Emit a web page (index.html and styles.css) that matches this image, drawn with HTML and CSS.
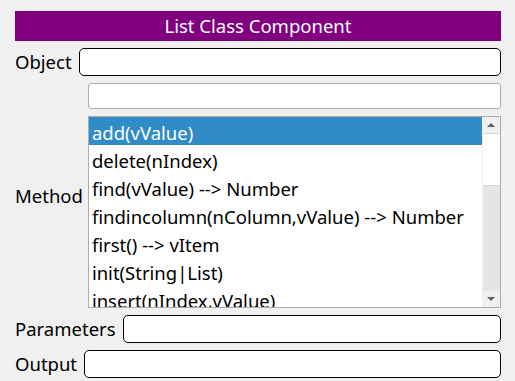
FILE: index.html
```html
<!DOCTYPE html>
<html lang="en">
<head>
    <meta charset="UTF-8">
    <meta name="viewport" content="width=device-width, initial-scale=1.0">
    <title>List Class Component</title>
    <link rel="stylesheet" href="styles.css">
</head>
<body>
    <div class="title">List Class Component</div>

    <div class="row">
        <label class="label" for="object">Object</label>
        <input class="field" type="text" id="object">
    </div>

    <div class="row method-row">
        <span class="label">Method</span>
        <div class="method-box">
            <input class="search" type="text">
            <div class="listbox">
                <ul class="items">
                    <li class="selected">add(vValue)</li>
                    <li>delete(nIndex)</li>
                    <li>find(vValue) --&gt; Number</li>
                    <li>findincolumn(nColumn,vValue) --&gt; Number</li>
                    <li>first() --&gt; vItem</li>
                    <li>init(String|List)</li>
                    <li>insert(nIndex,vValue)</li>
                </ul>
                <div class="scrollbar">
                    <div class="arrow up"></div>
                    <div class="thumb"></div>
                    <div class="track"></div>
                    <div class="arrow down"></div>
                </div>
            </div>
        </div>
    </div>

    <div class="row">
        <label class="label" for="params">Parameters</label>
        <input class="field" type="text" id="params">
    </div>

    <div class="row">
        <label class="label" for="output">Output</label>
        <input class="field" type="text" id="output">
    </div>
</body>
</html>
```

FILE: styles.css
```css
body {
    font-family: "Noto Sans", "Open Sans", sans-serif;
    font-size: 18.5px;
    margin: 0;
    padding: 11px 14px 0 15px;
    background-color: #f0f0f0;
    color: #000;
    display: flex;
    flex-direction: column;
    gap: 7px;
}

.title {
    background-color: #800080;
    color: #fff;
    height: 30px;
    line-height: 30px;
    text-align: center;
    font-size: 18.5px;
}

.row {
    display: flex;
    align-items: center;
    gap: 7px;
}

.label {
    white-space: nowrap;
    line-height: 24px;
}

.field {
    flex: 1;
    min-width: 0;
    height: 28px;
    box-sizing: border-box;
    border: 1px solid #000;
    border-radius: 5px;
    background-color: #fff;
    margin: 0;
}

.method-row {
    gap: 5px;
}

.method-box {
    flex: 1;
    display: flex;
    flex-direction: column;
    gap: 7px;
}

.search {
    height: 26px;
    box-sizing: border-box;
    border: 1px solid #adadad;
    border-radius: 3px;
    background-color: #fff;
    margin: 0;
}

.listbox {
    height: 192px;
    box-sizing: border-box;
    border: 1px solid #adadad;
    background-color: #fff;
    display: flex;
    overflow: hidden;
}

.items {
    flex: 1;
    list-style-type: none;
    margin: 0;
    padding: 0;
    font-size: 18.5px;
}

.items li {
    height: 28px;
    box-sizing: border-box;
    padding-top: 4px;
    line-height: 24px;
    padding-left: 3px;
    white-space: nowrap;
}

.items li.selected {
    background-color: #308cc6;
    color: #fff;
}

.scrollbar {
    width: 17px;
    display: flex;
    flex-direction: column;
    background-color: #f0f0f0;
    border-left: 1px solid #f0f0f0;
}

.arrow {
    height: 16px;
    position: relative;
    background-color: #f0f0f0;
}

.arrow::after {
    content: "";
    position: absolute;
    left: 4px;
    border-left: 4px solid transparent;
    border-right: 4px solid transparent;
}

.arrow.up::after {
    top: 6px;
    border-bottom: 4px solid #606060;
}

.arrow.down::after {
    top: 6px;
    border-top: 4px solid #606060;
}

.thumb {
    height: 53px;
    box-sizing: border-box;
    background-color: #fff;
    border-top: 1px solid #d4d4d4;
    border-bottom: 1px solid #d4d4d4;
}

.track {
    flex: 1;
    background-color: #e5e5e5;
}
```
